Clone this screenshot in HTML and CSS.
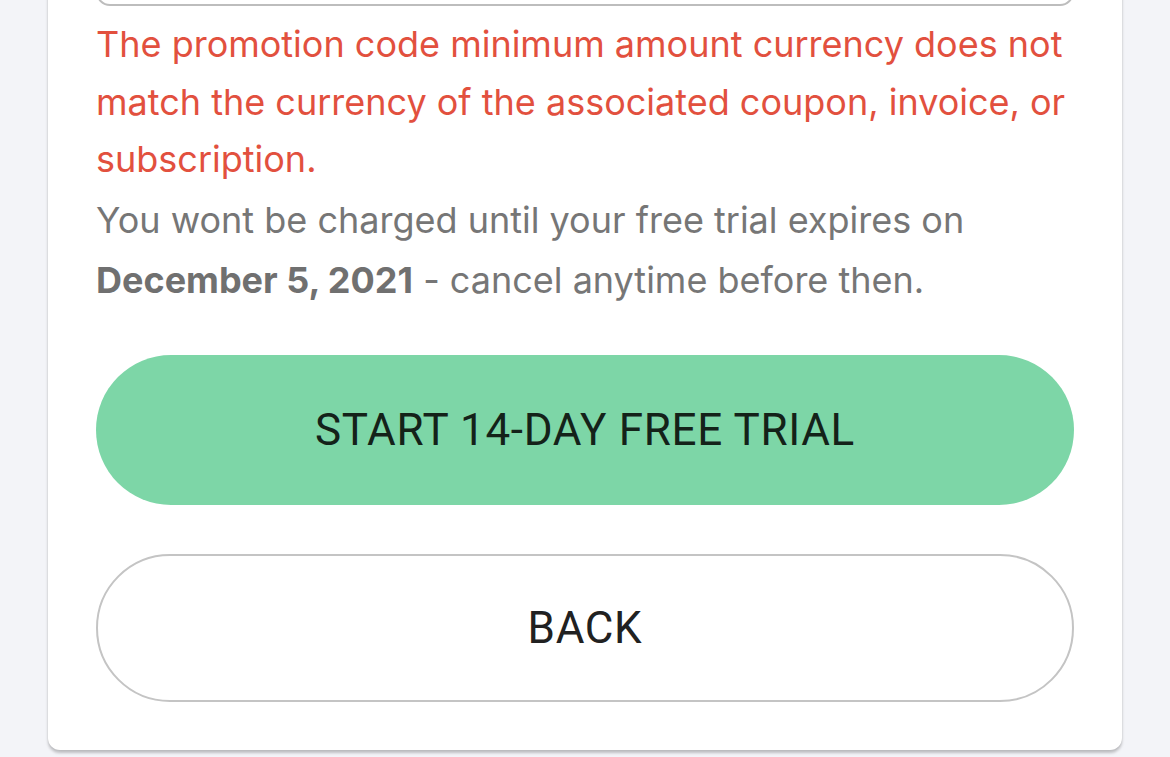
FILE: index.html
```html
<!DOCTYPE html>
<html lang="en">
<head>
  <meta charset="UTF-8" />
  <meta name="viewport" content="width=device-width, initial-scale=1.0"/>
  <title>Start your free trial</title>
  <link rel="stylesheet" href="styles.css">
</head>
<body>

  <div class="checkout-card">
    <!-- Promo code field -->
    <div class="promo-field">
      <input type="text" name="promoCode" placeholder="Promotion code" />
    </div>

    <p class="error-text">The promotion code minimum amount currency does not match the currency of the associated coupon, invoice, or subscription.</p>

    <p class="trial-note">You wont be charged until your free trial expires on <strong>December 5, 2021</strong> - cancel anytime before then.</p>

    <div class="actions">
      <button type="submit" class="btn btn-primary">Start 14-day free trial</button>
      <button type="button" class="btn btn-outline">Back</button>
    </div>
  </div>

</body>
</html>
```

FILE: styles.css
```css
html, body {
  height: 100%;
}

body {
  margin: 0;
  background: #f3f4f8;
  font-family: "Inter", "Noto Sans", sans-serif;
  display: flex;
  flex-direction: column;
  justify-content: flex-end;
  overflow: hidden;
}

.checkout-card {
  flex-shrink: 0;
  margin: 0 48px 7px;
  padding: 0 48px 48px;
  background: #ffffff;
  border-radius: 0 0 12px 12px;
  box-shadow: 0 3px 3px rgba(0, 0, 0, 0.22), 0 0 2px rgba(0, 0, 0, 0.08);
}

.promo-field input {
  display: block;
  width: 100%;
  height: 112px;
  box-sizing: border-box;
  border: 2px solid #bdbdbd;
  border-radius: 14px;
  padding: 0 24px;
  font: inherit;
  font-size: 36px;
  background: transparent;
}

.error-text,
.trial-note {
  font-size: 36px;
  margin: 0;
}

.error-text {
  color: #e2503e;
  line-height: 1.6;
  margin-top: 10px;
}

.trial-note {
  color: #767676;
  line-height: 60px;
  margin-top: 1px;
}

.trial-note strong {
  font-weight: 700;
  color: #707070;
}

.actions {
  display: flex;
  flex-direction: column;
  gap: 49px;
  margin-top: 45px;
}

.btn {
  height: 150px;
  border-radius: 75px;
  font-family: "Roboto", "Liberation Sans", sans-serif;
  font-size: 44px;
  font-weight: 400;
  letter-spacing: 0.015em;
  text-transform: uppercase;
  cursor: pointer;
}

.btn-primary {
  background: #7dd6a7;
  color: #142219;
  border: none;
}

.btn-outline {
  height: 148px;
  background: #ffffff;
  color: #212121;
  border: 2px solid #c4c4c4;
}
```
